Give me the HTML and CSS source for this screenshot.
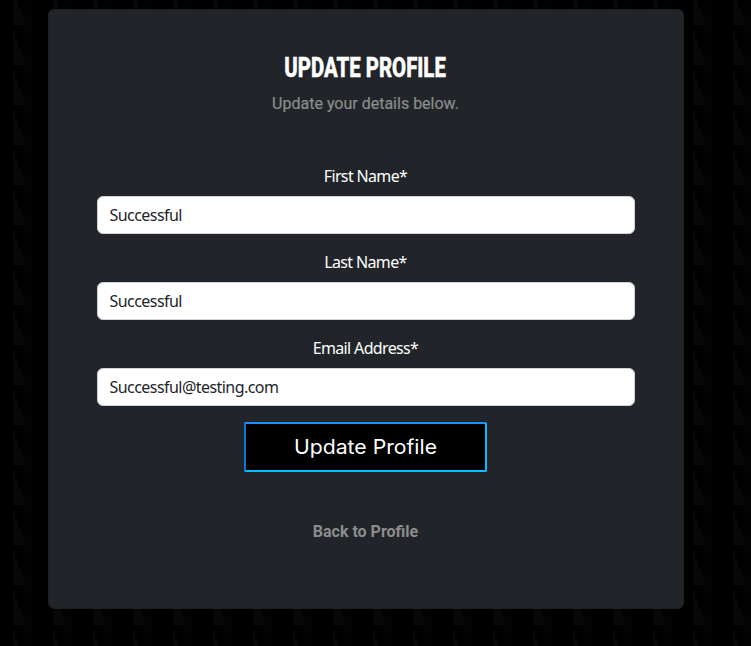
FILE: index.html
```html
<!DOCTYPE html>
<html lang="en">
<head>
<meta charset="utf-8">
<title>Update Profile</title>
<link rel="stylesheet" href="styles.css">
</head>
<body>
<svg class="pattern" aria-hidden="true">
  <defs>
    <pattern id="tile" width="40" height="40" patternUnits="userSpaceOnUse" x="13" y="25">
      <rect x="10" width="10" height="40" fill="#030303"/>
      <path d="M0 3L13 40H0Z" fill="#080808"/>
    </pattern>
  </defs>
  <rect width="100%" height="100%" fill="url(#tile)"/>
</svg>
<main class="card">
  <h1 class="title"><span>UPDATE PROFILE</span></h1>
  <p class="subtitle">Update your details below.</p>
  <form class="form">
    <label class="label" for="first">First Name*</label>
    <input class="input" id="first" value="Successful">
    <label class="label" for="last">Last Name*</label>
    <input class="input" id="last" value="Successful">
    <label class="label" for="email">Email Address*</label>
    <input class="input" id="email" value="Successful@testing.com">
    <button class="button" type="button"><span>Update Profile</span></button>
  </form>
  <a class="back">Back to Profile</a>
</main>
</body>
</html>
```
FILE: styles.css
```css
* { box-sizing: border-box; }
body {
  margin: 0;
  height: 646px;
  padding: 9px 67px 0 48px;
  background: #000;
  overflow: hidden;
}
.pattern {
  position: absolute;
  inset: 0;
  width: 100%;
  height: 100%;
}
.card {
  position: relative;
  display: flex;
  flex-direction: column;
  align-items: center;
  height: 600px;
  padding: 41px 48px 0;
  border: 1px solid #1d2023;
  border-radius: 6px;
  background: #212529;
}
.title {
  margin: 0 1px 0 0;
  height: 34px;
  font: 800 28px/34px Roboto, sans-serif;
  color: #fff;
  white-space: nowrap;
}
.title span {
  display: inline-block;
  -webkit-text-stroke: .5px #fff;
  transform: scaleX(.727);
}
.subtitle {
  margin: 7px 1px 48px 0;
  font: 400 16px/24px Roboto, sans-serif;
  -webkit-text-stroke: .2px #8c8c8c;
  color: #8c8c8c;
}
.form {
  display: flex;
  flex-direction: column;
  align-items: center;
  width: 538px;
}
.label {
  margin: 0 1px 8px 0;
  font: 400 16px/24px "Noto Sans", sans-serif;
  letter-spacing: -.65px;
  color: #fff;
}
.input {
  width: 538px;
  height: 38px;
  margin: 0 0 16px;
  padding: 6px 11.5px;
  border: 1px solid #ced4da;
  border-radius: 6px;
  background: #fff;
  font: 400 16px/24px "Noto Sans", sans-serif;
  letter-spacing: -.55px;
  color: #212529;
}
.button {
  width: 243px;
  height: 50px;
  margin-right: 2px;
  padding: 0;
  border: 2px solid;
  border-color: #1e90ff #00bfff #00bfff #0a7bd0;
  border-radius: 2px;
  background: #000;
  font: 400 20px/30px Inter, sans-serif;
  color: #fff;
}
.button span {
  display: inline-block;
  transform: scaleX(1.06);
}
.back {
  margin: 48px 1px 0 0;
  font: 700 16px/24px Roboto, sans-serif;
  color: #8c8c8c;
}
```
